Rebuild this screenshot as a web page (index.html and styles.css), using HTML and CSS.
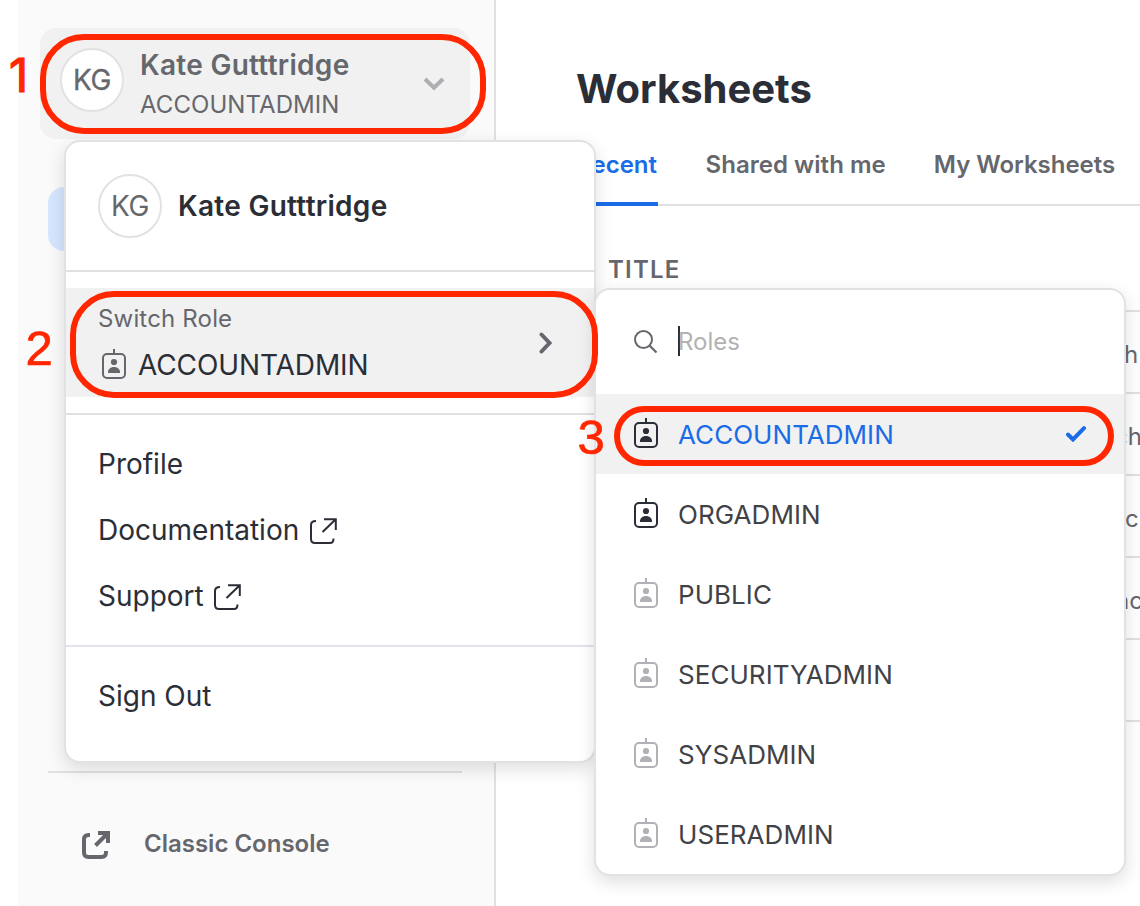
FILE: index.html
```html
<!DOCTYPE html>
<html lang="en">
<head>
<meta charset="utf-8">
<title>Worksheets</title>
<link rel="stylesheet" href="styles.css">
</head>
<body>
<svg width="0" height="0" class="defs">
  <symbol id="badge" viewBox="0 0 24 30">
    <path d="M12 0v5" fill="none" stroke="currentColor" stroke-width="2"/>
    <rect x="1" y="5" width="22" height="24" rx="4" fill="none" stroke="currentColor" stroke-width="2"/>
    <circle cx="12" cy="13" r="3.1" fill="currentColor"/>
    <path d="M6 24v-1c0-2.800 2.500-5 6-5s6 2.200 6 5v1z" fill="currentColor"/>
  </symbol>
  <symbol id="external" viewBox="0 0 27 27">
    <path d="M6 3C3 3 1 4 1 7v14c0 3 1.500 4 4 4h15c2.500 0 3.500-1.500 3.500-4.500M14 1.200h11.800V12M25.500 1.500L12.500 14" fill="none" stroke="currentColor" stroke-width="2"/>
  </symbol>
</svg>
<div class="app">
  <aside class="sidebar">
    <div class="account">
      <span class="avatar avatar-strong">KG</span>
      <div class="who">
        <div class="name">Kate Gutttridge</div>
        <div class="role">ACCOUNTADMIN</div>
      </div>
      <svg class="chev-down" width="22" height="14" viewBox="0 0 22 14"><path d="M2 2l9 8.800L20 2" fill="none" stroke="#aeaeb2" stroke-width="4"/></svg>
    </div>
    <div class="nav-active"></div>
    <div class="side-foot">
      <svg width="28" height="28" viewBox="0 0 28 28"><path d="M8 4H6.500Q2 4 2 8.500v13Q2 26 6.500 26h13Q24 26 24 21.500V20M16 2h10v10M25 3L13.500 14.500" fill="none" stroke="#66676d" stroke-width="4"/></svg>
      <span class="console">Classic Console</span>
    </div>
  </aside>
  <main class="main">
    <h1 class="title">Worksheets</h1>
    <nav class="tabs">
      <span class="tab tab-on">Recent</span>
      <span class="tab tab-shared">Shared with me</span>
      <span class="tab tab-mine">My Worksheets</span>
    </nav>
    <div class="thead">TITLE</div>
    <div class="rows">
      <div class="row r1">h</div>
      <div class="row r2">ch</div>
      <div class="row r3">c</div>
      <div class="row r4">nc</div>
      <div class="row"></div>
    </div>
  </main>
</div>

<section class="menu">
  <div class="profile">
    <span class="avatar">KG</span>
    <span class="pname">Kate Gutttridge</span>
  </div>
  <div class="switch-wrap">
    <div class="switch">
      <div>
        <div class="switch-label">Switch Role</div>
        <div class="switch-role"><svg class="badge" width="24" height="30"><use href="#badge"/></svg><span>ACCOUNTADMIN</span></div>
      </div>
      <svg class="chev-right" width="14" height="22" viewBox="0 0 14 22"><path d="M2.500 2.500L10.500 11l-8 8.500" fill="none" stroke="#66676d" stroke-width="4" stroke-linecap="round"/></svg>
    </div>
  </div>
  <div class="links">
    <div class="link"><span>Profile</span></div>
    <div class="link"><span>Documentation</span><svg width="27" height="27"><use href="#external"/></svg></div>
    <div class="link"><span>Support</span><svg width="27" height="27"><use href="#external"/></svg></div>
  </div>
  <div class="out">Sign Out</div>
</section>

<section class="roles">
  <div class="search">
    <svg width="24" height="24" viewBox="0 0 24 24"><circle cx="9.500" cy="9.500" r="8.500" fill="none" stroke="#66676d" stroke-width="2"/><path d="M15.500 15.500L22.500 22.500" stroke="#66676d" stroke-width="2.200"/></svg>
    <span class="caret"></span><span class="ph">Roles</span>
  </div>
  <div class="item item-on"><svg class="badge" width="24" height="30"><use href="#badge"/></svg><span>ACCOUNTADMIN</span>
    <svg class="check" width="20" height="16" viewBox="0 0 20 16"><path d="M2 8.500l5 5L18 2.200" fill="none" stroke="#1a6ce7" stroke-width="4" stroke-linecap="round"/></svg></div>
  <div class="item"><svg class="badge" width="24" height="30"><use href="#badge"/></svg><span>ORGADMIN</span></div>
  <div class="item item-dim"><svg class="badge" width="24" height="30"><use href="#badge"/></svg><span>PUBLIC</span></div>
  <div class="item item-dim"><svg class="badge" width="24" height="30"><use href="#badge"/></svg><span>SECURITYADMIN</span></div>
  <div class="item item-dim"><svg class="badge" width="24" height="30"><use href="#badge"/></svg><span>SYSADMIN</span></div>
  <div class="item item-dim"><svg class="badge" width="24" height="30"><use href="#badge"/></svg><span>USERADMIN</span></div>
</section>

<div class="ring ring1"></div>
<div class="ring ring2"></div>
<div class="ring ring3"></div>
<span class="step step1">1</span>
<span class="step step2">2</span>
<span class="step step3">3</span>
</body>
</html>
```
FILE: styles.css
```css
* { box-sizing: border-box; }
body { margin: 0; width: 1140px; height: 906px; overflow: hidden; position: relative; background: #fff; font-family: Inter, "Liberation Sans", sans-serif; color: #2b2e36; white-space: nowrap; }
svg { display: block; flex: none; }
.defs { position: absolute; }
.app { display: flex; height: 906px; padding-left: 18px; }

.sidebar { width: 478px; flex: none; background: #fafafa; border-right: 2px solid #e1e1e2; padding: 28px 24px 0 22px; }
.account { height: 111px; width: 430px; border-radius: 16px; background: #f1f1f1; display: flex; padding: 20px 25px 0 20px; }
.avatar { width: 64px; height: 64px; flex: none; border: 2px solid #e2e2e4; border-radius: 50%; background: #fff; color: #66676d; font-size: 28px; line-height: 60px; text-align: center; letter-spacing: -0.5px; }
.avatar-strong { -webkit-text-stroke: 0.3px #66676d; }
.who { margin-left: 16px; flex: 1; color: #66676d; }
.name { font-size: 28px; font-weight: 600; line-height: 35px; letter-spacing: .28px; }
.role { font-size: 24px; line-height: 30px; margin-top: 7px; letter-spacing: .07px; }
.chev-down { margin-top: 29px; }
.nav-active { width: 414px; height: 64px; margin: 48px 0 0 8px; border-radius: 16px; background: #d6e6ff; }
.side-foot { width: 414px; margin: 520px 0 0 8px; border-top: 2px solid #e1e1e2; padding: 58px 0 0 34px; display: flex; }
.console { margin: -2px 0 0 34px; font-size: 24px; line-height: 30px; font-weight: 600; color: #66676d; }

.main { flex: 1; min-width: 0; overflow: hidden; padding-top: 64px; }
.title { margin: 0 0 0 80px; font-size: 40px; line-height: 50px; font-weight: 700; }
.tabs { height: 92px; margin-left: 80px; border-bottom: 2px solid #e1e1e2; display: flex; padding-top: 35px; font-size: 24px; line-height: 32px; font-weight: 600; color: #66676d; }
.tab-on { width: 82px; height: 57px; padding-right: 1px; border-bottom: 4px solid #1a6ce7; color: #1a6ce7; text-align: right; }
.tab-shared { margin-left: 47.5px; letter-spacing: .04px; }
.tab-mine { margin-left: 48px; letter-spacing: -.03px; }
.thead { height: 106px; padding: 48px 0 0 112px; font-size: 24px; line-height: 32px; font-weight: 600; color: #66676d; letter-spacing: 1.2px; border-bottom: 2px solid #e1e1e2; }
.row { height: 82px; border-bottom: 2px solid #e1e1e2; font-size: 24px; line-height: 86px; color: #66676d; }
.r1 { padding-left: 628px; }
.r2 { padding-left: 618px; }
.r3 { padding-left: 629px; }
.r4 { padding-left: 619px; }

.menu, .roles { position: absolute; background: #fff; border: 2px solid #e1e2e3; border-radius: 16px; box-shadow: 0 6px 18px rgba(0, 0, 0, .13); overflow: hidden; }
.menu { left: 64px; top: 140px; width: 532px; height: 623px; font-size: 28px; }
.profile { height: 130px; border-bottom: 2px solid #e1e1e2; padding: 32px; display: flex; }
.pname { margin-left: 16px; line-height: 64px; font-weight: 600; letter-spacing: .28px; }
.switch-wrap { height: 143px; padding-top: 16px; border-bottom: 2px solid #e1e1e2; }
.switch { height: 109px; background: #f1f1f1; padding: 15px 41px 0 32px; display: flex; justify-content: space-between; }
.switch-label { font-size: 24px; line-height: 32px; color: #66676d; letter-spacing: .17px; }
.switch-role { display: flex; margin: 11px 0 0 4px; line-height: 38px; letter-spacing: -.1px; }
.switch-role .badge { margin: 3px 12px 0 0; color: #66676d; }
.chev-right { margin-top: 29px; }
.links { height: 232px; border-bottom: 2px solid #e1e4e8; padding: 16px 32px; }
.link { height: 66px; line-height: 66px; display: flex; align-items: center; gap: 10.5px; }
.link svg { margin-top: 2px; }
.out { padding-left: 32px; line-height: 98px; }

.roles { left: 594px; top: 288px; width: 532px; height: 588px; }
.search { height: 104px; padding: 40px 38px 0; display: flex; }
.caret { width: 2px; height: 30px; margin: -4px 0 0 20px; background: #2b2e36; }
.ph { margin-left: -2px; font-size: 24px; line-height: 24px; color: #b2b2b5; }
.item { height: 80px; padding: 0 38px; display: flex; align-items: center; font-size: 26px; letter-spacing: .05px; color: #414246; }
.item .badge { margin: -3px 20px 0 0; color: #2b2e36; }
.item-dim .badge { color: #b1b2b7; }
.item-on { background: #f1f1f1; color: #1a6ce7; }
.check { margin-left: auto; }

.ring { position: absolute; border: 6px solid #ff2600; }
.ring1 { left: 40px; top: 34px; width: 446px; height: 100px; border-radius: 44px; }
.ring2 { left: 70px; top: 291px; width: 528px; height: 107px; border-radius: 44px; }
.ring3 { left: 614px; top: 406px; width: 500px; height: 60px; border-radius: 30px; }
.step { position: absolute; font-family: "Liberation Sans", sans-serif; font-size: 49px; line-height: 56px; color: #ff2600; -webkit-text-stroke: .7px #ff2600; }
.step1 { left: 9px; top: 47px; font-family: Inter, sans-serif; font-size: 47px; -webkit-text-stroke-width: 1.2px; }
.step2 { left: 25.5px; top: 320px; }
.step3 { left: 577.5px; top: 409px; }
```
